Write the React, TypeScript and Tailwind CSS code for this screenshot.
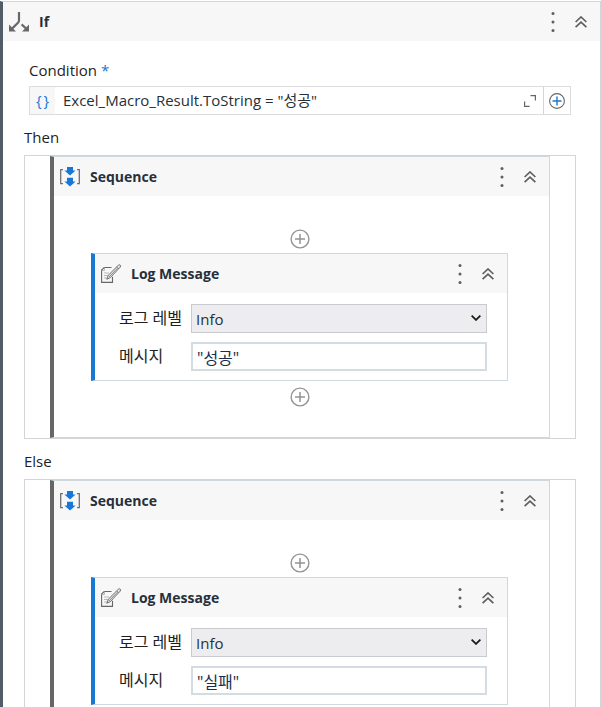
import { useId, useState } from 'react';
import type { ReactNode } from 'react';

function BranchIcon() {
  return (
    <svg className="h-5 w-5 shrink-0" viewBox="0 0 20 20" fill="none" aria-hidden="true">
      <path d="M10 0v8.5q0 1.2-1 2.2L3 16.6M12.6 12.4l5 4.6" stroke="#686868" strokeWidth="2.2" />
      <path d="M0 12.4V19.6h7zM20 12.4V19.6h-7z" fill="#686868" />
    </svg>
  );
}

function SequenceIcon() {
  return (
    <svg className="h-5 w-5 shrink-0" viewBox="0 0 20 20" fill="none" aria-hidden="true">
      <path d="M3 2.6H.7v14H3M17 2.6h2.3v14H17" stroke="#707070" strokeWidth="1.3" />
      <path d="M7 0h6v3.4h2.6L10 8.6 4.4 3.4H7zM7 10.8h6v3.6h2.6L10 19.6l-5.6-5.2H7z" fill="#1878d6" />
    </svg>
  );
}

function NoteIcon() {
  return (
    <svg className="h-5 w-5 shrink-0" viewBox="0 0 20 20" fill="none" aria-hidden="true">
      <path d="M10.5 3.5H3.2L.6 6v12.4h10.9v-5.6" stroke="#666" strokeWidth="1.1" />
      <path d="M.6 6.5h2.9v-3M3 9h5M3 11.5h3.5M3 14h3" stroke="#aaa" strokeWidth="0.8" />
      <path d="M17.4 1.1q1-.8 1.8 0t.1 1.9L9.4 13.6l-3.6 1.7 1.4-3.9z" fill="#e4e4e4" stroke="#666" strokeWidth="0.9" />
      <path d="M15.7 2.8l2 2M7.2 11.4l2.2 2.2M8.8 12.2L16.7 4" stroke="#777" strokeWidth="0.8" />
    </svg>
  );
}

function AddButton() {
  return (
    <button type="button" aria-label="Add activity" className="block">
      <svg className="h-5 w-5" viewBox="0 0 20 20" fill="none" stroke="#949494" aria-hidden="true">
        <circle cx="10" cy="10" r="8.9" strokeWidth="1.4" />
        <path d="M10 5v10M5 10h10" strokeWidth="1.5" />
      </svg>
    </button>
  );
}

function Header({ icon, title }: { icon: ReactNode; title: string }) {
  return (
    <header className="flex h-[39px] items-center bg-[#f7f7f7] pl-1.5 pr-2">
      {icon}
      <h2 className="ml-2.5 flex-1 text-sm font-bold text-[#273039]">{title}</h2>
      <button type="button" aria-label="Options" className="mr-[9px] flex w-4 justify-center">
        <svg className="h-5 w-1" viewBox="0 0 4 20" fill="#5f5f5f" aria-hidden="true">
          <circle cx="2" cy="1.6" r="1.5" />
          <circle cx="2" cy="10" r="1.5" />
          <circle cx="2" cy="18.4" r="1.5" />
        </svg>
      </button>
      <button type="button" aria-label="Collapse" className="flex w-[22px] justify-center">
        <svg className="h-3 w-3" viewBox="0 0 12 12" fill="none" stroke="#5f5f5f" strokeWidth="1.7" aria-hidden="true">
          <path d="M.6 6L6 1l5.4 5M.6 11.2L6 6.2l5.4 5" />
        </svg>
      </button>
    </header>
  );
}

function LogMessage({ initial }: { initial: string }) {
  const id = useId();
  const [level, setLevel] = useState('Info');
  const [message, setMessage] = useState(initial);

  return (
    <section className="w-full border border-l-4 border-[#cfd8dd] border-l-[#1878d2] bg-white">
      <Header icon={<NoteIcon />} title="Log Message" />
      <div className="flex flex-col gap-[9px] pb-[9px] pl-6 pr-5 pt-[11px]">
        <div className="flex h-[29px] items-center">
          <label htmlFor={`${id}-level`} className="w-[72px] shrink-0 whitespace-nowrap pb-0.5 text-base leading-5">로그 레벨</label>
          <div className="relative flex-1">
            <select
              id={`${id}-level`}
              value={level}
              onChange={(e) => setLevel(e.target.value)}
              className="block h-[29px] w-full appearance-none border border-[#c9cacf] bg-[#ededef] pl-1 text-[#273039]"
            >
              <option>Trace</option>
              <option>Info</option>
              <option>Warn</option>
              <option>Error</option>
              <option>Fatal</option>
            </select>
            <svg
              className="pointer-events-none absolute right-1.5 top-[11px] h-1.5 w-2.5"
              viewBox="0 0 10 6"
              fill="none"
              stroke="#1c1c1c"
              strokeWidth="1.8"
              aria-hidden="true"
            >
              <path d="M.6.6L5 4.9 9.4.6" />
            </svg>
          </div>
        </div>
        <div className="flex h-[29px] items-center">
          <label htmlFor={`${id}-message`} className="w-[72px] shrink-0 whitespace-nowrap pb-0.5 text-base leading-5">메시지</label>
          <input
            id={`${id}-message`}
            value={message}
            onChange={(e) => setMessage(e.target.value)}
            className="h-[29px] min-w-0 flex-1 border-2 border-[#d3dde1] bg-white pl-1 text-base leading-5 text-[#1c2c4c]"
          />
        </div>
      </div>
    </section>
  );
}

function Branch({ label, message }: { label: string; message: string }) {
  return (
    <>
      <h3 className="flex h-10 items-center pt-1">{label}</h3>
      <div className="border border-[#d4d4d4] px-[25px]">
        <section className="border border-l-4 border-[#cfd8dd] border-l-[#666]">
          <Header icon={<SequenceIcon />} title="Sequence" />
          <div className="flex flex-col items-center pb-[30px] pl-[37px] pr-[41px] pt-[33px]">
            <AddButton />
            <div className="mb-1.5 mt-1 w-full">
              <LogMessage initial={message} />
            </div>
            <AddButton />
          </div>
        </section>
      </div>
    </>
  );
}

export default function App() {
  const [condition, setCondition] = useState('Excel_Macro_Result.ToString = "성공"');

  return (
    <main className="h-screen overflow-hidden bg-white pt-px font-['Open_Sans','Noto_Sans_CJK_KR',sans-serif] text-[15px] leading-5 text-[#1e1e1e]">
      <section className="border-l-3 border-r border-t border-[#cfd8dd] border-l-[#505d69]">
        <Header icon={<BranchIcon />} title="If" />
        <div className="pb-6 pl-[21px] pr-6 pt-[19px]">
          <div className="px-[5px]">
            <label htmlFor="condition" className="block">
              Condition <span className="text-[#1878d2]">*</span>
            </label>
            <div className="mt-1.5 flex h-[29px] border border-[#dcdcdc]">
              <span className="flex w-[25px] items-center justify-center gap-0.5 bg-[#f7f7f7] pb-0.5 text-[#1878d2]">
                <span>{'{'}</span>
                <span>{'}'}</span>
              </span>
              <input
                id="condition"
                value={condition}
                onChange={(e) => setCondition(e.target.value)}
                className="min-w-0 flex-1 pb-0.5 pl-2 text-[#273039]"
              />
              <button type="button" aria-label="Expand editor" className="flex w-[27px] items-center justify-center">
                <svg className="h-3 w-3" viewBox="0 0 12 12" fill="none" stroke="#666" strokeWidth="1.2" aria-hidden="true">
                  <path d="M6.5.6h4.9v5M.6 6.4v5h5" />
                </svg>
              </button>
              <button type="button" aria-label="Insert" className="flex w-[27px] items-center justify-center border-l border-[#d4d4d4]">
                <svg className="h-4 w-4" viewBox="0 0 16 16" fill="none" aria-hidden="true">
                  <circle cx="8" cy="8" r="7.4" stroke="#666" strokeWidth="1.1" />
                  <path d="M8 3.5v9M3.5 8h9" stroke="#1878d2" strokeWidth="1.4" />
                </svg>
              </button>
            </div>
          </div>
          <Branch label="Then" message={'"성공"'} />
          <Branch label="Else" message={'"실패"'} />
        </div>
      </section>
    </main>
  );
}
